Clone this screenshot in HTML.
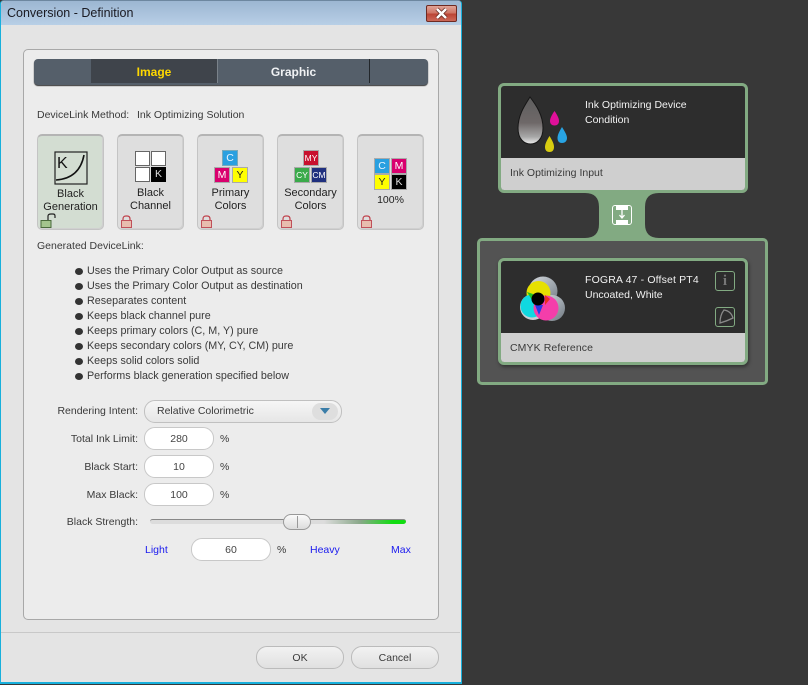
<!DOCTYPE html>
<html><head><meta charset="utf-8"><style>
html,body{margin:0;padding:0;width:808px;height:685px;overflow:hidden;background:#383838}
*{box-sizing:border-box}
body{font-family:"Liberation Sans",sans-serif;font-size:10.5px;color:#3a3a3a;position:relative}
.a{position:absolute}
.t{position:absolute;white-space:nowrap;line-height:15px}
.r{position:absolute;white-space:nowrap;line-height:15px;text-align:right;width:110px;left:28px}
.card{position:absolute;top:134px;width:67px;height:96px;background:#dedede;border:1px solid #c4c4c4;border-top:2px solid #b4b4b4;border-radius:5px;box-shadow:inset -1px -1px 0 #d0d0d0}
.lbl{position:absolute;left:0;width:100%;text-align:center;font-size:11px;line-height:13px;color:#222}
.b{position:absolute;left:75px;width:8px;height:7px;background:#333;border-radius:50%}
.li{position:absolute;left:87px;white-space:nowrap;line-height:15px;font-size:10.75px}
.inp{position:absolute;left:144px;width:70px;height:23px;background:#fff;border:1px solid #c8c8c8;border-radius:11px;text-align:center;line-height:23px;color:#444}
.sw{position:absolute;text-align:center;font-size:10.5px;line-height:14px;border:1px solid #aaa;width:16px;height:16px}
</style></head><body>

<!-- dialog window -->
<div class="a" style="left:0;top:0;width:462px;height:684px;background:#e4e4e4;border:1px solid #18b0dc;border-top:1px solid #6d87a0;border-bottom:2px solid #18b0dc;border-radius:4px 4px 0 0"></div>
<div class="a" style="left:1px;top:1px;width:460px;height:24px;background:linear-gradient(#9cb6d2,#b8cfe6);border-radius:4px 4px 0 0"></div>
<div class="t" style="left:7px;top:6px;font-size:12.5px;color:#1a1a22">Conversion - Definition</div>
<div class="a" style="left:426px;top:5px;width:31px;height:17px;background:linear-gradient(#e0a498 0,#cf7666 45%,#bc4636 55%,#cc6858);border:1px solid #6e2a22;border-radius:2px"></div>
<svg class="a" style="left:434px;top:7px" width="15" height="13"><path d="M3 2L12 11M12 2L3 11" stroke="#5a2018" stroke-width="4" fill="none"/><path d="M3 2L12 11M12 2L3 11" stroke="#fff" stroke-width="2.6" fill="none"/></svg>

<!-- panel -->
<div class="a" style="left:23px;top:49px;width:416px;height:571px;background:#ececec;border:1px solid #a8a8a8;border-radius:5px"></div>

<!-- tabs -->
<div class="a" style="left:34px;top:59px;width:394px;height:26px;background:#555f6a;border-radius:4px;box-shadow:0 1px 1px #333"></div>
<div class="a" style="left:91px;top:59px;width:127px;height:24px;background:#3f444b;border-right:1px solid #7a828a"></div>
<div class="a" style="left:369px;top:59px;width:1px;height:24px;background:#22262a"></div>
<div class="t" style="left:91px;width:126px;top:65px;text-align:center;font-weight:bold;font-size:12px;color:#ffd800">Image</div>
<div class="t" style="left:218px;width:151px;top:65px;text-align:center;font-weight:bold;font-size:12px;color:#f0f2f4">Graphic</div>

<div class="t" style="left:37px;top:108px">DeviceLink Method:</div>
<div class="t" style="left:137px;top:108px">Ink Optimizing Solution</div>

<!-- card 1 -->
<div class="card" style="left:37px;background:#d3ddd2">
  <svg class="a" style="left:16px;top:15px" width="35" height="34"><rect x="1" y="1" width="32" height="32" fill="none" stroke="#222" stroke-width="1.2"/><path d="M2 29C17 28 27 20 30 4" fill="none" stroke="#111" stroke-width="1.6"/></svg>
  <div class="a" style="left:19px;top:20px;font-size:16px;line-height:16px;color:#111">K</div>
  <div class="lbl" style="top:52px">Black</div>
  <div class="lbl" style="top:65px">Generation</div>
  <svg class="a" style="left:2px;top:77px" width="16" height="16"><path d="M8 7V3Q8 1 11 1H13Q15 1 15 3V5" fill="none" stroke="#222" stroke-width="1.2"/><rect x="1" y="7.5" width="10" height="7" fill="#a3c48d" stroke="#4a6a3c"/></svg>
</div>
<!-- card 2 -->
<div class="card" style="left:117px">
  <div class="a" style="left:17px;top:15px;width:15px;height:15px;background:#fff;border:1px solid #666"></div>
  <div class="a" style="left:33px;top:15px;width:15px;height:15px;background:#fff;border:1px solid #666"></div>
  <div class="a" style="left:17px;top:31px;width:15px;height:15px;background:#fff;border:1px solid #666"></div>
  <div class="a" style="left:33px;top:31px;width:15px;height:15px;background:#000;color:#ddd;text-align:center;line-height:15px;font-size:10.5px">K</div>
  <div class="lbl" style="top:51px">Black</div>
  <div class="lbl" style="top:64px">Channel</div>
  <svg class="a" style="left:2px;top:79px" width="13" height="14"><path d="M3 6V4Q3 1 6 1H7Q10 1 10 4V6" fill="none" stroke="#c0404a" stroke-width="1.2"/><rect x="1.5" y="5.5" width="10" height="7" fill="#e8bcae" stroke="#c0505a"/></svg>
</div>
<!-- card 3 -->
<div class="card" style="left:197px">
  <div class="sw" style="left:24px;top:14px;background:#29a0e0;color:#e8f4ff;border-color:#7ab">C</div>
  <div class="sw" style="left:16px;top:31px;background:#d9006e;color:#fff">M</div>
  <div class="sw" style="left:34px;top:31px;background:#ffff00;color:#222">Y</div>
  <div class="lbl" style="top:51px">Primary</div>
  <div class="lbl" style="top:64px">Colors</div>
  <svg class="a" style="left:2px;top:79px" width="13" height="14"><path d="M3 6V4Q3 1 6 1H7Q10 1 10 4V6" fill="none" stroke="#c0404a" stroke-width="1.2"/><rect x="1.5" y="5.5" width="10" height="7" fill="#e8bcae" stroke="#c0505a"/></svg>
</div>
<!-- card 4 -->
<div class="card" style="left:277px">
  <div class="sw" style="left:25px;top:14px;background:#c8102e;color:#fff;font-size:8.5px">MY</div>
  <div class="sw" style="left:16px;top:31px;background:#3aaa4a;color:#fff;font-size:8.5px">CY</div>
  <div class="sw" style="left:33px;top:31px;background:#20307f;color:#fff;font-size:8.5px">CM</div>
  <div class="lbl" style="top:51px">Secondary</div>
  <div class="lbl" style="top:64px">Colors</div>
  <svg class="a" style="left:2px;top:79px" width="13" height="14"><path d="M3 6V4Q3 1 6 1H7Q10 1 10 4V6" fill="none" stroke="#c0404a" stroke-width="1.2"/><rect x="1.5" y="5.5" width="10" height="7" fill="#e8bcae" stroke="#c0505a"/></svg>
</div>
<!-- card 5 -->
<div class="card" style="left:357px">
  <div class="sw" style="left:16px;top:22px;background:#29a0e0;color:#e8f4ff">C</div>
  <div class="sw" style="left:33px;top:22px;background:#d9006e;color:#fff">M</div>
  <div class="sw" style="left:16px;top:38px;background:#ffff00;color:#222">Y</div>
  <div class="sw" style="left:33px;top:38px;background:#000;color:#ddd">K</div>
  <div class="lbl" style="top:58px;font-size:10.5px">100%</div>
  <svg class="a" style="left:2px;top:79px" width="13" height="14"><path d="M3 6V4Q3 1 6 1H7Q10 1 10 4V6" fill="none" stroke="#c0404a" stroke-width="1.2"/><rect x="1.5" y="5.5" width="10" height="7" fill="#e8bcae" stroke="#c0505a"/></svg>
</div>

<div class="t" style="left:37px;top:239px">Generated DeviceLink:</div>

<div class="b" style="top:268px"></div><div class="li" style="top:264px">Uses the Primary Color Output as source</div>
<div class="b" style="top:283px"></div><div class="li" style="top:279px">Uses the Primary Color Output as destination</div>
<div class="b" style="top:298px"></div><div class="li" style="top:294px">Reseparates content</div>
<div class="b" style="top:313px"></div><div class="li" style="top:309px">Keeps black channel pure</div>
<div class="b" style="top:328px"></div><div class="li" style="top:324px">Keeps primary colors (C, M, Y) pure</div>
<div class="b" style="top:343px"></div><div class="li" style="top:339px">Keeps secondary colors (MY, CY, CM) pure</div>
<div class="b" style="top:358px"></div><div class="li" style="top:354px">Keeps solid colors solid</div>
<div class="b" style="top:373px"></div><div class="li" style="top:369px">Performs black generation specified below</div>

<!-- form -->
<div class="r" style="top:404px">Rendering Intent:</div>
<div class="a" style="left:144px;top:400px;width:198px;height:23px;background:linear-gradient(#f6f6f6,#e6e6e6);border:1px solid #c0c0c0;border-radius:11px"></div>
<div class="t" style="left:157px;top:404px">Relative Colorimetric</div>
<div class="a" style="left:312px;top:403px;width:26px;height:17px;background:#dedede;border-radius:9px"></div>
<div class="a" style="left:320px;top:408px;width:0;height:0;border-left:5px solid transparent;border-right:5px solid transparent;border-top:6px solid #3a7da8"></div>

<div class="r" style="top:432px">Total Ink Limit:</div><div class="inp" style="top:427px">280</div><div class="t" style="left:220px;top:432px">%</div>
<div class="r" style="top:460px">Black Start:</div><div class="inp" style="top:455px">10</div><div class="t" style="left:220px;top:460px">%</div>
<div class="r" style="top:488px">Max Black:</div><div class="inp" style="top:483px">100</div><div class="t" style="left:220px;top:488px">%</div>
<div class="r" style="top:515px">Black Strength:</div>

<div class="a" style="left:150px;top:519px;width:256px;height:5px;border-radius:3px;border-top:1px solid #888;background:linear-gradient(90deg,#dcdcdc 0,#dcdcdc 68%,#8aa88a 82%,#11dd11 95%)"></div>
<div class="a" style="left:283px;top:514px;width:28px;height:16px;background:linear-gradient(#fafafa,#dcdcdc);border:1px solid #999;border-radius:8px"></div>
<div class="a" style="left:297px;top:516px;width:1px;height:12px;background:#999"></div>

<div class="t" style="left:145px;top:543px;color:#1a1aee">Light</div>
<div class="inp" style="left:191px;top:538px;width:80px">60</div>
<div class="t" style="left:277px;top:543px">%</div>
<div class="t" style="left:310px;top:543px;color:#1a1aee">Heavy</div>
<div class="t" style="left:391px;top:543px;color:#1a1aee">Max</div>

<!-- footer -->
<div class="a" style="left:1px;top:632px;width:459px;height:1px;background:#c8c8c8"></div>
<div class="a" style="left:256px;top:646px;width:88px;height:23px;background:linear-gradient(#f2f2f2,#e0e0e0);border:1px solid #bbb;border-radius:11px;text-align:center;line-height:23px">OK</div>
<div class="a" style="left:351px;top:646px;width:88px;height:23px;background:linear-gradient(#f2f2f2,#e0e0e0);border:1px solid #bbb;border-radius:11px;text-align:center;line-height:23px">Cancel</div>

<!-- right: node graph -->
<div class="a" style="left:477px;top:238px;width:291px;height:147px;background:#535353;border:3px solid #82aa82;border-radius:5px"></div>
<svg class="a" style="left:0;top:0" width="808" height="685"><path d="M585 190H659V193Q645 193 645 207V224Q645 238 659 238V241H585V238Q599 238 599 224V207Q599 193 585 193Z" fill="#82aa82"/></svg>
<div class="a" style="left:498px;top:83px;width:250px;height:110px;background:#2d2d2d;border:3px solid #82aa82;border-radius:6px;overflow:hidden">
  <div class="a" style="left:0;top:72px;width:100%;height:35px;background:#cfcfcf"></div>
</div>
<div class="t" style="left:585px;top:98px;color:#f2f2f2">Ink Optimizing Device</div>
<div class="t" style="left:585px;top:113px;color:#f2f2f2">Condition</div>
<div class="t" style="left:510px;top:166px;color:#3a3a3a">Ink Optimizing Input</div>

<svg class="a" style="left:515px;top:95px" width="62" height="62">
  <defs>
    <linearGradient id="g" x1="0" y1="0" x2="0" y2="1"><stop offset="0" stop-color="#5e5e5e"/><stop offset=".55" stop-color="#6e6868"/><stop offset=".85" stop-color="#a8a8a8"/><stop offset="1" stop-color="#eee"/></linearGradient>
  </defs>
  <path d="M15 2C10 10 3 20 3 33C3 44 9 49 15.500 49C22 49 28 44 28 33C28 20 21 10 15 2Z" fill="url(#g)" stroke="#161616" stroke-width="1"/>
  <path d="M39.500 16C36 21 35 24 35 26C35 29 37 30.500 39.500 30.500C42 30.500 44 29 44 26C44 24 43 21 39.500 16Z" fill="#e0109a"/>
  <path d="M47 32C44 37 42.500 40 42.500 43C42.500 46.500 44.500 48 47 48C49.500 48 52 46.500 52 43C52 40 50 37 47 32Z" fill="#28a4e4"/>
  <path d="M34.500 41C31.500 46 30 49 30 52C30 55.500 32 57 34.500 57C37 57 39 55.500 39 52C39 49 37.500 46 34.500 41Z" fill="#d8cc10"/>
</svg>

<div class="a" style="left:612px;top:205px;width:20px;height:20px;border:1px solid #fff;border-radius:3px;background:#82aa82"></div>
<div class="a" style="left:616px;top:206px;width:12px;height:4px;background:#fff"></div>
<div class="a" style="left:616px;top:220px;width:12px;height:4px;background:#fff"></div>
<svg class="a" style="left:618px;top:210px" width="8" height="10"><path d="M4 0V7M1.500 5L4 8L6.500 5" fill="none" stroke="#fff" stroke-width="1.300"/></svg>

<div class="a" style="left:498px;top:258px;width:250px;height:107px;background:#2d2d2d;border:3px solid #82aa82;border-radius:6px;overflow:hidden;box-shadow:1px 2px 3px #333">
  <div class="a" style="left:0;top:72px;width:100%;height:35px;background:#cfcfcf"></div>
</div>
<div class="t" style="left:585px;top:273px;color:#f2f2f2;letter-spacing:.15px">FOGRA 47 - Offset PT4</div>
<div class="t" style="left:585px;top:288px;color:#f2f2f2">Uncoated, White</div>
<div class="t" style="left:510px;top:341px;color:#3a3a3a;letter-spacing:.1px">CMYK Reference</div>

<svg class="a" style="left:515px;top:272px" width="52" height="52">
  <defs><linearGradient id="s" x1="0" y1="0" x2="1" y2="1"><stop offset="0" stop-color="#d8dce0"/><stop offset=".6" stop-color="#9aa2aa"/><stop offset="1" stop-color="#70787f"/></linearGradient></defs>
  <circle cx="28" cy="19" r="14.500" fill="url(#s)"/><circle cx="37" cy="36" r="13" fill="url(#s)"/>
  <circle cx="18" cy="35" r="13" fill="#c8ced4"/>
  <circle cx="23.500" cy="21" r="12" fill="#e6e000"/>
  <circle cx="17" cy="34" r="11.500" fill="#10d8e0"/>
  <circle cx="31" cy="36" r="12.500" fill="#f43eaa"/>
  <path d="M20 33L28 33L24 43Z" fill="#2838e8"/>
  <path d="M12 20L18 22L17 28Z" fill="#20c020"/>
  <path d="M30 23L35 27L30 33Z" fill="#e83020"/>
  <circle cx="23" cy="27" r="6.500" fill="#000"/>
</svg>

<div class="a" style="left:715px;top:271px;width:20px;height:20px;border:1px solid #82aa82;border-radius:3px;color:#777;text-align:center;font:bold 15px/18px 'Liberation Serif',serif">i</div>
<div class="a" style="left:715px;top:307px;width:20px;height:20px;border:1px solid #82aa82;border-radius:3px"></div>
<svg class="a" style="left:716px;top:308px" width="18" height="18"><path d="M4 15Q4 7 8 2Q15 3 17 10Q11 13 4 15Z" fill="none" stroke="#8a8a8a" stroke-width="1.300"/></svg>

</body></html>
